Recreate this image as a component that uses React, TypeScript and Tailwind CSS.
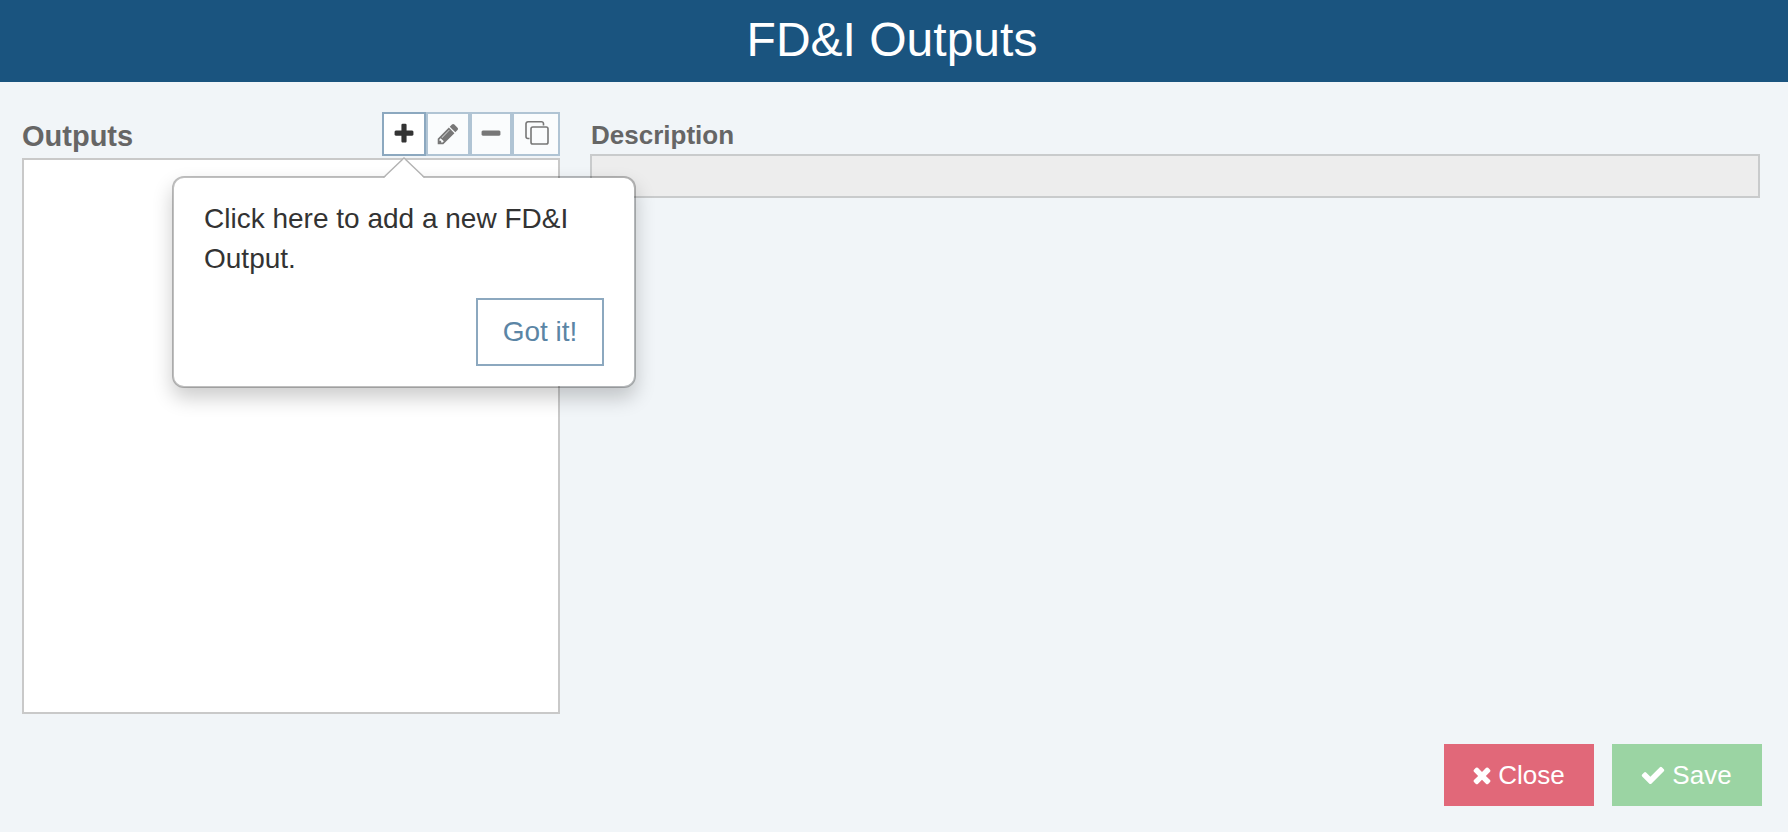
import React from 'react';

const PLUS = 'M1600 736v192q0 40-28 68t-68 28h-416v416q0 40-28 68t-68 28h-192q-40 0-68-28t-28-68v-416h-416q-40 0-68-28t-28-68v-192q0-40 28-68t68-28h416v-416q0-40 28-68t68-28h192q40 0 68 28t28 68v416h416q40 0 68 28t28 68z';
const PENCIL = 'M491 1536l91-91-235-235-91 91v107h128v128h107zm523-928q0-22-22-22-10 0-17 7l-542 542q-7 7-7 17 0 22 22 22 10 0 17-7l542-542q7-7 7-17zm-54-192l416 416-832 832h-416v-416zm683 96q0 53-37 90l-166 166-416-416 166-165q36-38 90-38 53 0 91 38l235 234q37 39 37 91z';
const MINUS = 'M1600 736v192q0 40-28 68t-68 28h-1216q-40 0-68-28t-28-68v-192q0-40 28-68t68-28h1216q40 0 68 28t28 68z';
const TIMES = 'M1490 1322q0 40-28 68l-136 136q-28 28-68 28t-68-28l-294-294-294 294q-28 28-68 28t-68-28l-136-136q-28-28-28-68t28-68l294-294-294-294q-28-28-28-68t28-68l136-136q28-28 68-28t68 28l294 294 294-294q28-28 68-28t68 28l136 136q28 28 28 68t-28 68l-294 294 294 294q28 28 28 68z';
const CHECK = 'M1671 566q0 40-28 68l-724 724-136 136q-28 28-68 28t-68-28l-136-136-362-362q-28-28-28-68t28-68l136-136q28-28 68-28t68 28l294 295 656-657q28-28 68-28t68 28l136 136q28 28 28 68z';

type IconProps = { d: string; className: string; viewBox?: string };

const Icon: React.FC<IconProps> = ({ d, className, viewBox = '0 0 1792 1792' }) => (
  <svg viewBox={viewBox} className={className} fill="currentColor" aria-hidden="true">
    <path d={d} />
  </svg>
);

const CopyIcon: React.FC = () => (
  <svg viewBox="0 0 24 24" className="w-6 h-6" fill="none" stroke="currentColor" strokeWidth="1.6" aria-hidden="true">
    <path d="M4.500 17.500H3A2 2 0 0 1 1 15.500V2.800A2 2 0 0 1 3 0.800H16.500A2 2 0 0 1 18.500 2.800V4.500" />
    <rect x="6" y="6" width="17" height="17" rx="1.800" />
  </svg>
);

const GotItPopover: React.FC = () => (
  <div
    role="dialog"
    aria-label="Add output hint"
    className="absolute top-16 -left-[210px] z-10 w-[464px] rounded-xl border-2 border-black/25 bg-white bg-clip-padding px-[30px] pt-[21px] pb-5 shadow-[0_10px_20px_rgba(0,0,0,0.2)]"
  >
    <svg viewBox="0 0 42 22" className="absolute -top-[21px] left-[209px] w-[42px] h-[22px]" aria-hidden="true">
      <path d="M0 22L21 1L42 22Z" fill="#fff" />
      <path d="M0.500 20.500L21 1L41.500 20.500" fill="none" stroke="#b3b3b3" strokeWidth="1.400" />
    </svg>
    <p className="text-[28px] leading-10 text-[#333]">Click here to add a new FD&amp;I Output.</p>
    <div className="mt-[19px] flex justify-end">
      <button type="button" className="h-[68px] w-32 border-2 border-[#8ca8bf] bg-white text-[28px] leading-10 text-[#5b85a5]">
        Got it!
      </button>
    </div>
  </div>
);

export default function App() {
  return (
    <div className="flex min-h-screen flex-col bg-[#f1f5f8] font-['Liberation_Sans',Arial,sans-serif]">
      <header className="bg-[#1a547f] pt-[10px] pr-1 pb-3 text-center">
        <h1 className="text-[48px] leading-[60px] text-white">FD&amp;I Outputs</h1>
      </header>

      <main className="flex grow gap-[30px] pt-[30px] pr-7 pl-[22px]">
        <section className="flex w-[538px] shrink-0 flex-col">
          <div className="mb-0.5 flex h-11 items-end justify-between">
            <h2 id="outputs" className="text-[29px] leading-10 font-bold text-[#666]">Outputs</h2>
            <div className="relative flex h-11">
              <button type="button" aria-label="Add output" className="flex w-11 items-center justify-center border-2 border-[#8ca8bf] bg-white text-[#333]">
                <Icon d={PLUS} className="w-6 h-6" />
              </button>
              <button type="button" disabled aria-label="Edit output" className="flex w-11 items-center justify-center border-2 border-[#b0c4d4] bg-[#fafcfd] text-[#777]">
                <Icon d={PENCIL} className="w-6 h-6" />
              </button>
              <button type="button" disabled aria-label="Remove output" className="flex w-[42px] items-center justify-center border-2 border-[#b0c4d4] bg-[#fafcfd] text-[#777]">
                <Icon d={MINUS} className="w-6 h-6" />
              </button>
              <button type="button" disabled aria-label="Copy output" className="flex w-12 items-center justify-center border-2 border-[#b0c4d4] bg-[#fafcfd] pb-0.5 pl-0.5 text-[#777]">
                <CopyIcon />
              </button>
              <GotItPopover />
            </div>
          </div>
          <ul aria-labelledby="outputs" className="grow border-2 border-[#c9c9c9] bg-white" />
        </section>

        <section className="flex grow flex-col pt-1.5">
          <label htmlFor="description" className="mb-0.5 pl-px text-[26px] leading-[34px] font-bold text-[#666]">Description</label>
          <input id="description" type="text" disabled className="h-11 w-full border-2 border-[#c9cbcc] bg-[#ededed] px-2 text-[26px]" />
        </section>
      </main>

      <footer className="flex justify-end gap-[18px] pt-[30px] pr-[26px] pb-[26px]">
        <button type="button" className="flex h-[62px] w-[150px] items-center justify-center gap-1.5 bg-[#e16879] pr-px text-[26px] text-white">
          <Icon d={TIMES} viewBox="192 0 1408 1792" className="w-5 h-[26px]" />
          Close
        </button>
        <button type="button" disabled className="flex h-[62px] w-[150px] items-center justify-center gap-1.5 bg-[#9bd4a3] pr-0.5 text-[26px] text-white">
          <Icon d={CHECK} className="w-[26px] h-[26px]" />
          Save
        </button>
      </footer>
    </div>
  );
}
